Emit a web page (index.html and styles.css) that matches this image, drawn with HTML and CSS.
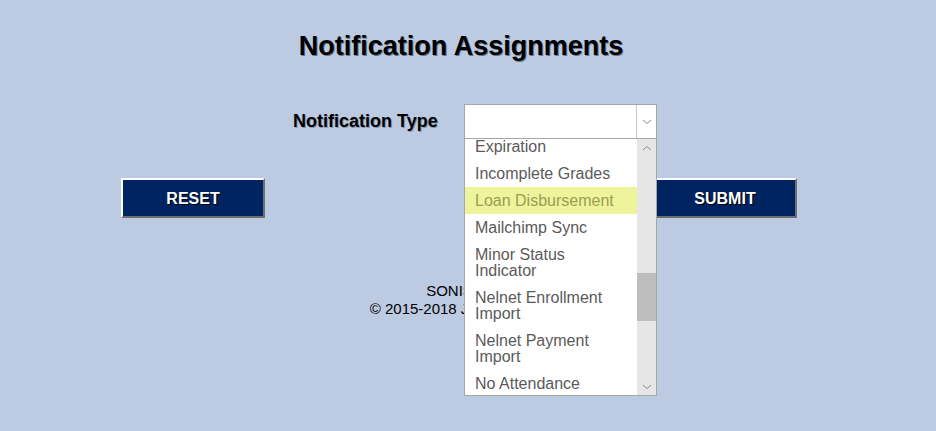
FILE: index.html
```html
<!DOCTYPE html>
<html>
<head>
<meta charset="utf-8">
<title>Notification Assignments</title>
<link rel="stylesheet" href="styles.css">
</head>
<body>
<div class="page">
  <h1 class="title">Notification Assignments</h1>
  <div class="field-row">
    <label class="field-label">Notification Type</label>
    <div class="select-wrap">
      <div class="select-box">
        <div class="select-value"></div>
        <div class="select-arrow">
          <svg width="10" height="6" viewBox="0 0 10 6"><path d="M1 1 L5 4.5 L9 1" fill="none" stroke="#8a8a8a" stroke-width="1"/></svg>
        </div>
      </div>
      <div class="dropdown">
        <ul class="options">
          <li class="option">Expiration</li>
          <li class="option">Incomplete Grades</li>
          <li class="option hover">Loan Disbursement</li>
          <li class="option">Mailchimp Sync</li>
          <li class="option">Minor Status Indicator</li>
          <li class="option">Nelnet Enrollment Import</li>
          <li class="option">Nelnet Payment Import</li>
          <li class="option">No Attendance</li>
        </ul>
        <div class="scrollbar">
          <div class="scroll-btn">
            <svg width="10" height="6" viewBox="0 0 10 6"><path d="M1 5 L5 1.5 L9 5" fill="none" stroke="#8a8a8a" stroke-width="1"/></svg>
          </div>
          <div class="scroll-track">
            <div class="scroll-thumb"></div>
          </div>
          <div class="scroll-btn">
            <svg width="10" height="6" viewBox="0 0 10 6"><path d="M1 1 L5 4.5 L9 1" fill="none" stroke="#8a8a8a" stroke-width="1"/></svg>
          </div>
        </div>
      </div>
    </div>
  </div>
  <div class="button-row">
    <button class="btn">RESET</button>
    <button class="btn">SUBMIT</button>
  </div>
  <div class="footer">
    <div>SONIS 4.7</div>
    <div>© 2015-2018 Jenzabar, Inc.</div>
  </div>
</div>
</body>
</html>
```

FILE: styles.css
```css
html, body {
  margin: 0;
  padding: 0;
}
body {
  background: #bccbe2;
  font-family: "Liberation Sans", Arial, sans-serif;
  color: #000;
  min-height: 431px;
}
.page {
  padding: 31px 14px 0 0;
  width: 922px;
  min-height: 400px;
}
.title {
  margin: 0;
  text-align: center;
  font-size: 27px;
  line-height: 31px;
  font-weight: bold;
  text-shadow: 1px 1px 0 #6a7488;
}
.field-row {
  display: flex;
  align-items: center;
  margin-top: 42px;
  padding-left: 293px;
}
.field-label {
  font-size: 18px;
  font-weight: bold;
  width: 171px;
  text-shadow: 1px 1px 0 #8a96ab;
}
.select-wrap {
  position: relative;
  width: 193px;
}
.select-box {
  display: flex;
  height: 33px;
  border: 1px solid #a6a6a6;
  background: #fff;
}
.select-value {
  flex: 1;
}
.select-arrow {
  width: 19px;
  border-left: 1px solid #c8c8c8;
  display: flex;
  align-items: center;
  justify-content: center;
}
.dropdown {
  position: absolute;
  top: 34px;
  left: 0;
  width: 191px;
  height: 256px;
  border: 1px solid #a6a6a6;
  background: #fff;
  display: flex;
  overflow: hidden;
}
.options {
  list-style: none;
  margin: -6px 0 0 0;
  padding: 0;
  flex: 1;
}
.option {
  font-size: 16px;
  line-height: 16px;
  padding: 5.5px 16px 5.5px 10px;
  color: #5a5a5a;
}
.option.hover {
  background: #eef49c;
  color: #9a9d52;
}
.scrollbar {
  width: 19px;
  background: #e6e6e6;
  display: flex;
  flex-direction: column;
}
.scroll-btn {
  height: 17px;
  display: flex;
  align-items: center;
  justify-content: center;
}
.scroll-track {
  flex: 1;
  padding-top: 117px;
}
.scroll-thumb {
  height: 48px;
  background: #bdbdbd;
}
.button-row {
  display: flex;
  margin-top: 39px;
  padding-left: 121px;
  gap: 388px;
}
.btn {
  width: 144px;
  height: 40px;
  background: #002462;
  color: #fff;
  font-family: "Liberation Sans", Arial, sans-serif;
  font-size: 16px;
  font-weight: bold;
  border: 2px solid;
  border-color: #ffffff #6e6e6e #6e6e6e #ffffff;
  text-shadow: 1px 1px 1px #000;
  padding: 2px 0 0 0;
  margin: 0;
}
.footer {
  margin-top: 64px;
  text-align: center;
  font-size: 15px;
  line-height: 18px;
  padding-left: 2px;
}
```
